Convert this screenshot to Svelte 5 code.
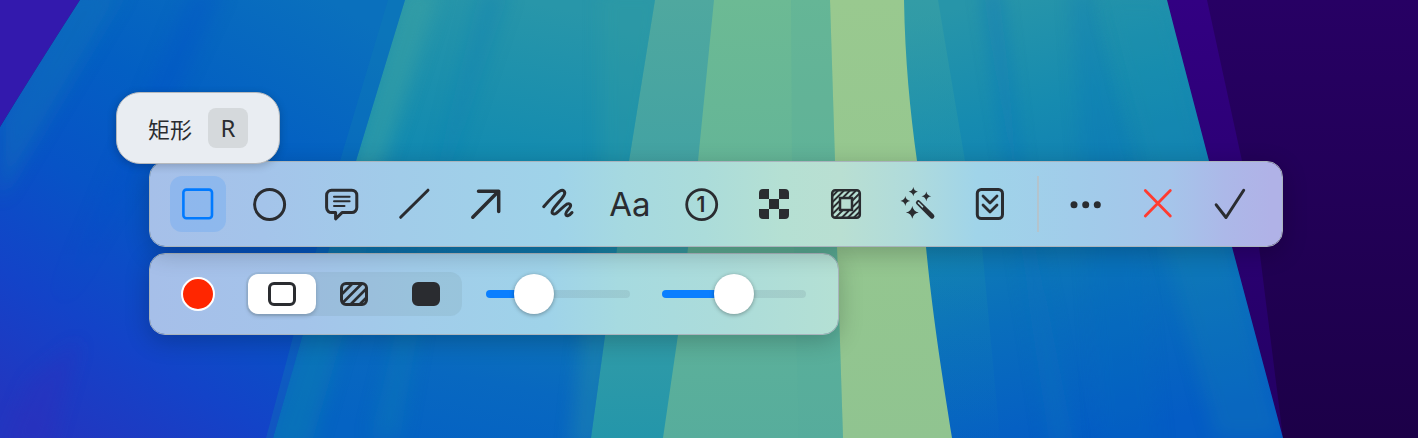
<script>
  let tool = $state('rect');
  let fill = $state('outline');
  let strokeWidth = $state(27);
  let opacity = $state(50);

  const tools = [
    { id: 'rect', label: '矩形' },
    { id: 'ellipse', label: '椭圆' },
    { id: 'comment', label: '批注' },
    { id: 'line', label: '直线' },
    { id: 'arrow', label: '箭头' },
    { id: 'pen', label: '画笔' },
    { id: 'text', label: '文字' },
    { id: 'number', label: '序号' },
    { id: 'mosaic', label: '马赛克' },
    { id: 'spotlight', label: '高亮' },
    { id: 'magic', label: '魔棒' },
    { id: 'scroll', label: '长截图' }
  ];
  const actions = [
    { id: 'more', label: '更多' },
    { id: 'cancel', label: '取消' },
    { id: 'done', label: '完成' }
  ];
  const fills = [
    { id: 'outline', label: '描边' },
    { id: 'hatch', label: '半透明' },
    { id: 'solid', label: '填充' }
  ];

  // The filled part of a track ends under the centre of its 40px thumb.
  const stop = (v) => `calc(20px + (100% - 40px) * ${v / 100})`;
</script>

{#snippet star(x, y, r)}
  <path
    class="solid"
    d="M{x} {y - r}Q{x + r * 0.14} {y - r * 0.14} {x + r} {y}Q{x + r * 0.14} {y + r * 0.14} {x} {y + r}Q{x - r * 0.14} {y + r * 0.14} {x - r} {y}Q{x - r * 0.14} {y - r * 0.14} {x} {y - r}Z"
  />
{/snippet}

{#snippet icon(id)}
  <svg class="icon" viewBox="0 0 40 40" aria-hidden="true">
    {#if id === 'rect'}
      <rect x="5.4" y="5.6" width="28.6" height="28.6" rx="3" stroke-width="2.6" />
    {:else if id === 'ellipse'}
      <circle cx="19.6" cy="20.5" r="15" />
    {:else if id === 'comment'}
      <path d="M10 6.2H29.8a5 5 0 0 1 5 5V23.6a5 5 0 0 1-5 5H20L13.6 34.8V28.6H10a5 5 0 0 1-5.4-5V11.2a5 5 0 0 1 5.4-5Z" />
      <path d="M12 12.7H27.6M12 17.3H27.6M12 22H22.5" stroke-width="2" />
    {:else if id === 'line'}
      <path d="M6.7 33.3L34 6.2" />
    {:else if id === 'arrow'}
      <path d="M12.5 7.2H32.7V27.5M6.8 33.2L32.3 7.6" stroke-width="3.5" />
    {:else if id === 'pen'}
      <path d="M5.7 22.7C11 16.5 17.5 9.5 21.5 7.2C25.5 5 28 7.8 26 11.2C22.5 17 16.5 22.5 14.5 26.5C13.2 29.4 15.5 31 18.2 29.2C22 26.5 25 22.3 28.7 20.2C31.5 18.8 33.6 20.6 32 23.3C30.5 25.8 28 27.5 27.8 29.8C27.7 32.8 31 32.3 34 28.5" />
    {:else if id === 'number'}
      <circle cx="19.7" cy="20.6" r="15" stroke-width="2.8" />
      <text x="19" y="28">1</text>
    {:else if id === 'mosaic'}
      <path
        class="solid"
        d="M9 5H15V15H5V9a4 4 0 0 1 4-4ZM25 5H31a4 4 0 0 1 4 4V15H25ZM15 15H25V25H15ZM5 25H15V35H9a4 4 0 0 1-4-4ZM25 25H35V31a4 4 0 0 1-4 4H25Z"
      />
    {:else if id === 'spotlight'}
      <rect x="6.2" y="6.2" width="27.6" height="27.6" rx="3" stroke-width="2.5" />
      <rect class="square" x="14" y="14" width="12" height="12" stroke-width="2.5" />
      <path
        d="M6 12.5L12.500 6M6 18.500L18.500 6M6 24.500L13 17.500M17.500 13L24.500 6M6 30.500L13 23.500M23.500 13L30.500 6M9.500 33.500L16.500 26.500M26.500 16.500L33.500 9.500M15.500 34L22.500 27M27 22.500L34 15.500M21.500 34L34 21.500M27.500 34L34 27.500"
        stroke-width="1.8"
      />
    {:else if id === 'magic'}
      {@render star(15.3, 7.7, 4.6)}
      {@render star(28.3, 12.3, 4.9)}
      {@render star(7.3, 17, 4.9)}
      {@render star(14.3, 28.4, 6.4)}
      <path d="M20.3 18.6L34 32.3" stroke-width="4.8" />
      <path class="slit" d="M20.5 18.8L24.5 22.8" stroke-width="1.6" />
    {:else if id === 'scroll'}
      <rect x="7.3" y="5.5" width="25.2" height="29" rx="4" />
      <path d="M13 12L20 19L27 12M13 21L20 28L27 21" stroke-width="2.8" />
    {:else if id === 'more'}
      <circle class="solid" cx="8" cy="20.7" r="3.5" />
      <circle class="solid" cx="19.7" cy="20.7" r="3.5" />
      <circle class="solid" cx="31.3" cy="20.7" r="3.5" />
    {:else if id === 'cancel'}
      <path d="M7.3 6.5L32.3 32M32.3 6.5L7.3 32" stroke-width="2.8" />
    {:else if id === 'done'}
      <path d="M6.2 20.8L16 33.5L33.7 6.3" />
    {/if}
  </svg>
{/snippet}

<main>
  <!-- Bands are stacked right to left, each one running under its left-hand neighbour. -->
  <svg class="wallpaper" viewBox="0 0 1418 438" preserveAspectRatio="none" aria-hidden="true">
    <defs>
      <linearGradient id="a" gradientUnits="userSpaceOnUse" x1="330" y1="0" x2="60" y2="440">
        <stop offset="0" stop-color="#0a70bd" />
        <stop offset=".32" stop-color="#035fc3" />
        <stop offset=".55" stop-color="#0753c6" />
        <stop offset=".78" stop-color="#1343c8" />
        <stop offset="1" stop-color="#2236c0" />
      </linearGradient>
      <linearGradient id="b" gradientUnits="userSpaceOnUse" x1="520" y1="0" x2="430" y2="438">
        <stop offset="0" stop-color="#2896a9" />
        <stop offset=".35" stop-color="#138bb0" />
        <stop offset=".6" stop-color="#0e79b6" />
        <stop offset=".85" stop-color="#0868c0" />
        <stop offset="1" stop-color="#0563c3" />
      </linearGradient>
      <linearGradient id="b2" x1="0" y1="0" x2="0" y2="1">
        <stop offset="0" stop-color="#4fa89f" />
        <stop offset=".4" stop-color="#42a2a3" />
        <stop offset="1" stop-color="#2496aa" />
      </linearGradient>
      <linearGradient id="c" x1="0" y1="0" x2="0" y2="1">
        <stop offset="0" stop-color="#6cba94" />
        <stop offset="1" stop-color="#57ad9c" />
      </linearGradient>
      <linearGradient id="d" x1="0" y1="0" x2="0" y2="1">
        <stop offset="0" stop-color="#99c98f" />
        <stop offset="1" stop-color="#90c490" />
      </linearGradient>
      <linearGradient id="e" gradientUnits="userSpaceOnUse" x1="990" y1="0" x2="1100" y2="438">
        <stop offset="0" stop-color="#2795a9" />
        <stop offset=".25" stop-color="#168bb0" />
        <stop offset=".45" stop-color="#1080b3" />
        <stop offset=".7" stop-color="#096ebc" />
        <stop offset="1" stop-color="#045cc5" />
      </linearGradient>
      <linearGradient id="e2" x1="0" y1="0" x2="0" y2="1">
        <stop offset="0" stop-color="#3fa3a3" stop-opacity=".5" />
        <stop offset=".5" stop-color="#2096aa" stop-opacity=".3" />
        <stop offset="1" stop-color="#1480b4" stop-opacity=".05" />
      </linearGradient>
      <linearGradient id="f" x1="0" y1="0" x2="0" y2="1">
        <stop offset="0" stop-color="#320082" />
        <stop offset="1" stop-color="#230063" />
      </linearGradient>
      <linearGradient id="g" x1="0" y1="0" x2="0" y2="1">
        <stop offset="0" stop-color="#270064" />
        <stop offset="1" stop-color="#1c0048" />
      </linearGradient>
      <filter id="soft" x="-50%" y="-10%" width="200%" height="120%">
        <feGaussianBlur stdDeviation="9" />
      </filter>
      <clipPath id="clipA"><path d="M80 0H405L356 161L303 334L273 438H0V127Q38 65 80 0Z" /></clipPath>
      <clipPath id="clipB"><path d="M395 0H655L629 161L591 438H263L293 334L346 161Z" /></clipPath>
      <clipPath id="clipE"><path d="M894 0H1167L1176 35L1209 161L1232 247L1283 438H940L921 300L907 161Z" /></clipPath>
    </defs>
    <rect width="1418" height="438" fill="url(#g)" />
    <path d="M1160 0H1207L1242 161L1259 247L1283 438H1270Z" fill="url(#f)" />
    <g clip-path="url(#clipE)">
      <rect x="890" width="400" height="438" fill="url(#e)" />
      <path d="M890 0H938L965 161L982 247L1000 438H890Z" fill="url(#e2)" />
      <path d="M982 -10H1000L1020 161L1075 448H1050Z" fill="#0872bd" opacity=".4" filter="url(#soft)" />
      <path d="M1070 -10H1090L1130 161L1160 448H1100Z" fill="#066cbf" opacity=".2" filter="url(#soft)" />
      <path d="M1100 0H1167L1209 161L1283 438H1215Z" fill="#1e92ac" opacity=".22" filter="url(#soft)" />
    </g>
    <path d="M820 0H904C905 60 910 110 917 161L926 247C933 320 943 380 952 438H830Z" fill="url(#d)" />
    <path d="M700 0H830L835 161L837 247L843 438H650Z" fill="url(#c)" />
    <path d="M791 0H830L835 161L837 247L843 438H799L792 161Z" fill="#55ad9c" opacity=".3" />
    <path d="M640 0H714L698 161L678 335L663 438H580Z" fill="url(#b2)" />
    <g clip-path="url(#clipB)">
      <rect x="260" width="400" height="438" fill="url(#b)" />
      <path d="M405 -10H440L385 161L350 200H340Z" fill="#3da3a3" opacity=".55" filter="url(#soft)" />
      <path d="M480 -10H510L440 200L400 438H370Z" fill="#0a80b4" opacity=".35" filter="url(#soft)" />
      <path d="M600 -10H665L600 448H570L600 161Z" fill="#36a09f" opacity=".3" filter="url(#soft)" />
      <path d="M303 334L330 240L370 240L310 448H265Z" fill="#1080b0" opacity=".5" filter="url(#soft)" />
    </g>
    <path d="M0 0H80Q38 65 0 127Z" fill="#3319ad" />
    <g clip-path="url(#clipA)">
      <rect width="420" height="438" fill="url(#a)" />
      <path d="M70 -10H125L0 200V120Z" fill="#1474b8" opacity=".45" filter="url(#soft)" />
      <path d="M190 -10H225L150 150L60 300Z" fill="#004fc9" opacity=".3" filter="url(#soft)" />
      <path d="M388 0H405L356 161L273 438H266L340 161Z" fill="#1180b4" opacity=".3" />
      <path d="M30 380L80 340L50 450H0Z" fill="#302abb" opacity=".3" filter="url(#soft)" />
    </g>
  </svg>

  <div class="panel tools" role="toolbar" aria-label="标注工具">
    {#each tools as t}
      <button
        class="tool"
        class:active={tool === t.id}
        aria-label={t.label}
        aria-pressed={tool === t.id}
        onclick={() => (tool = t.id)}
      >
        {#if t.id === 'text'}
          <span class="aa">Aa</span>
        {:else}
          {@render icon(t.id)}
        {/if}
        {#if t.id === 'rect'}
          <span class="tip" role="tooltip">矩形<kbd>R</kbd></span>
        {/if}
      </button>
    {/each}
    <span class="divider"></span>
    {#each actions as a}
      <button class="tool {a.id}" aria-label={a.label}>{@render icon(a.id)}</button>
    {/each}
  </div>

  <div class="panel options">
    <button class="swatch" aria-label="颜色"></button>
    <div class="segments" role="radiogroup" aria-label="填充样式">
      {#each fills as f}
        <label class:chosen={fill === f.id}>
          <input type="radio" name="fill" value={f.id} aria-label={f.label} bind:group={fill} />
          <svg viewBox="0 0 28 24" aria-hidden="true">
            <rect class={f.id} x="1.5" y="1.5" width="25" height="21" rx="4.5" />
            {#if f.id === 'hatch'}
              <path d="M2.5 11.5L12 2M3 20.500L21.500 2M10.500 22.500L26.500 6.500M19.500 22.500L26.500 15.500" stroke-width="2.6" />
            {/if}
          </svg>
        </label>
      {/each}
    </div>
    <div class="sliders">
      <input type="range" aria-label="线宽" bind:value={strokeWidth} style:--stop={stop(strokeWidth)} />
      <input type="range" aria-label="不透明度" bind:value={opacity} style:--stop={stop(opacity)} />
    </div>
  </div>
</main>

<style>
  :global(body) {
    margin: 0;
  }

  main {
    --ink: #2a2c30;
    position: relative;
    box-sizing: border-box;
    min-height: 100vh;
    padding: 161px 16px 16px 149px;
    display: flex;
    flex-direction: column;
    align-items: flex-start;
    gap: 6px;
    overflow: hidden;
    color: var(--ink);
    font-family: Inter, 'Noto Sans CJK SC', sans-serif;
  }

  .wallpaper {
    position: absolute;
    inset: 0;
    width: 100%;
    height: 100%;
  }

  .panel {
    position: relative;
    display: flex;
    align-items: center;
    border: 1px solid #a9b4bd;
    border-radius: 16px;
    background-clip: padding-box;
    box-shadow: 0 6px 24px rgba(0, 0, 0, 0.22);
  }

  .tools {
    z-index: 1;
    gap: 16px;
    padding: 14px 24px 14px 20px;
    background-image: linear-gradient(
      90deg,
      #a6c0e9 0%,
      #a4c4ea 10%,
      #a1cce9 22%,
      #9fd3e9 36%,
      #a6d9e0 42%,
      #abdcda 49%,
      #b5e0d3 56%,
      #b9dfd2 61%,
      #b0dbdb 67%,
      #a0d4e9 73%,
      #a1ccea 82%,
      #a5c5ea 90%,
      #acb8e8 95%,
      #b0b2e7 99%
    );
  }

  button {
    padding: 0;
    border: 0;
    background: none;
    color: inherit;
    font: inherit;
  }

  .tool {
    position: relative;
    display: flex;
    align-items: center;
    justify-content: center;
    width: 56px;
    height: 56px;
    border-radius: 12px;
  }

  .tool.active {
    background: rgba(64, 148, 250, 0.22);
    color: #007aff;
  }

  .tool.cancel {
    color: #ff3b30;
  }

  .icon {
    width: 40px;
    height: 40px;
  }

  svg.icon,
  label svg {
    fill: none;
    stroke: currentColor;
    stroke-width: 3;
    stroke-linecap: round;
    stroke-linejoin: round;
  }

  .icon .solid {
    fill: currentColor;
    stroke: none;
  }

  .icon .square {
    stroke-linejoin: miter;
  }

  .icon .slit {
    stroke: #b1dbdc;
  }

  .icon text {
    fill: currentColor;
    stroke: none;
    font-size: 21px;
    font-weight: 600;
    text-anchor: middle;
  }

  .aa {
    font-size: 33px;
    line-height: 40px;
  }

  .divider {
    width: 8px;
    height: 56px;
    background: linear-gradient(#b4c4cd, #b4c4cd) center / 2px 100% no-repeat;
  }

  .tip {
    position: absolute;
    bottom: calc(100% + 12px);
    left: 50%;
    transform: translateX(-50%);
    box-sizing: border-box;
    display: flex;
    align-items: center;
    gap: 16px;
    padding: 15px 31px;
    border: 1px solid #b6b9bd;
    border-radius: 24px;
    background: #e9edf2;
    box-shadow: 0 2px 8px rgba(0, 0, 0, 0.2);
    color: var(--ink);
    font-family: 'Noto Sans CJK SC', sans-serif;
    font-size: 22px;
    line-height: 38px;
    white-space: nowrap;
  }

  kbd {
    width: 40px;
    height: 40px;
    border-radius: 8px;
    background: #d5d9dc;
    font-family: 'Noto Sans', sans-serif;
    font-size: 24px;
    line-height: 40px;
    text-align: center;
  }

  .options {
    padding: 18px 32px 18px 31px;
    background-image: linear-gradient(
      90deg,
      #a6bfe9 0%,
      #a4c4ea 22%,
      #a1ccea 38%,
      #9fd3e9 58%,
      #a6dae0 68%,
      #acdcda 84%,
      #b4e0d4 100%
    );
  }

  .swatch {
    width: 34px;
    height: 34px;
    margin-right: 31px;
    border: 2px solid #fff;
    border-radius: 50%;
    background: #ff2600;
  }

  .segments {
    display: flex;
    margin-right: 24px;
    border-radius: 12px;
    background: rgba(110, 140, 150, 0.16);
  }

  label {
    position: relative;
    display: flex;
    align-items: center;
    justify-content: center;
    width: 68px;
    height: 40px;
    margin: 2px;
    border-radius: 10px;
  }

  label.chosen {
    background: #fff;
    box-shadow: 0 2px 4px rgba(0, 0, 0, 0.2);
  }

  label input {
    position: absolute;
    inset: 0;
    margin: 0;
    opacity: 0;
  }

  label svg {
    width: 28px;
    height: 24px;
  }

  rect.solid {
    fill: currentColor;
  }

  .sliders {
    display: flex;
    gap: 32px;
  }

  input[type='range'] {
    appearance: none;
    width: 144px;
    height: 40px;
    margin: 0;
    background: none;
  }

  input[type='range']::-webkit-slider-runnable-track {
    height: 8px;
    border-radius: 4px;
    background: linear-gradient(90deg, #0a7fff var(--stop), rgba(110, 140, 150, 0.2) var(--stop));
  }

  input[type='range']::-webkit-slider-thumb {
    appearance: none;
    width: 40px;
    height: 40px;
    margin-top: -16px;
    border-radius: 50%;
    background: #fff;
    box-shadow: 0 1px 4px rgba(0, 0, 0, 0.35);
  }
</style>
